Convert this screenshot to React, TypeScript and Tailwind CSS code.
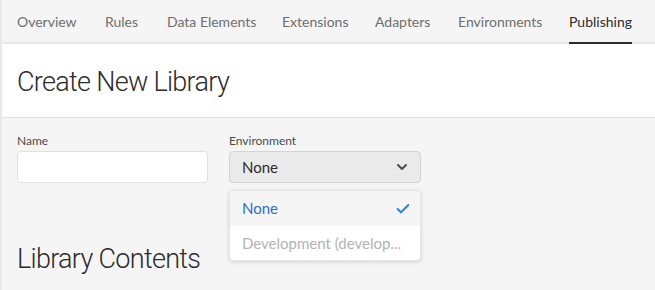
import { Check, ChevronDown } from 'lucide-react';

const tabs = [
  { label: 'Overview', w: 'w-[88px]' },
  { label: 'Rules', w: 'w-[62px]' },
  { label: 'Data Elements', w: 'w-[115px]' },
  { label: 'Extensions', w: 'w-[93px]' },
  { label: 'Adapters', w: 'w-[83px]' },
  { label: 'Environments', w: 'w-[111px]' },
  { label: 'Publishing', w: 'w-[59px]' },
];

const heading = 'font-[Roboto,sans-serif] text-[27px] font-light text-[#2c2c2c] tracking-[-0.7px]';

export default function App() {
  return (
    <div
      className="w-[655px] h-[290px] overflow-hidden bg-[#f5f5f5] border-l-2 border-[#e8e8e8] text-[#2c2c2c]"
      style={{ fontFamily: 'Lato, "Noto Sans", sans-serif' }}
    >
      {/* tabs */}
      <nav className="h-[44px] flex items-stretch pl-[15px] border-b-2 border-[#e8e8e8] bg-[#f5f5f5]">
        {tabs.map((t) => (
          <div
            key={t.label}
            className={`${t.w} shrink-0 whitespace-nowrap flex items-center`}
          >
            <span
              className={`relative h-full flex items-center text-[14px] ${
                t.label === 'Publishing' ? 'text-[#2c2c2c]' : 'text-[#6e6e6e]'
              }`}
            >
              {t.label}
              {t.label === 'Publishing' && (
                <span className="absolute left-0 right-0 -bottom-[2px] h-[2px] bg-[#2c2c2c]" />
              )}
            </span>
          </div>
        ))}
      </nav>

      {/* header */}
      <div className="h-[74px] bg-white border-b border-[#e1e1e1] flex items-center pl-[15px] pt-[4px]">
        <h1 className={heading}>Create New Library</h1>
      </div>

      {/* form */}
      <div className="pl-[15px] pt-[13px]">
        <div className="flex gap-[21px]">
          <div className="flex flex-col">
            <label className="text-[12px] text-[#4b4b4b] h-[20px] leading-[20px]">Name</label>
            <div className="w-[191px] h-[32px] bg-white border border-[#e1e1e1] rounded-[4px]" />
          </div>
          <div className="relative flex flex-col">
            <label className="text-[12px] text-[#4b4b4b] h-[20px] leading-[20px]">Environment</label>
            <div className="w-[192px] h-[32px] bg-[#eaeaea] border border-[#d3d3d3] rounded-[4px] flex items-center justify-between pl-[12px] pr-[10px] text-[15px]">
              <span>None</span>
              <ChevronDown size={16} strokeWidth={3} className="text-[#4b4b4b]" />
            </div>
            {/* menu */}
            <div className="absolute top-[59px] left-0 w-[192px] bg-white rounded-[4px] shadow-[0_1px_4px_rgba(0,0,0,0.15)] border border-[#e6e6e6] overflow-hidden z-10">
              <div className="h-[35px] bg-[#f5f5f5] flex items-center justify-between pl-[12px] pr-[9px] text-[15px] text-[#2d6ec9]">
                <span>None</span>
                <Check size={16} strokeWidth={3} className="text-[#2680eb]" />
              </div>
              <div className="h-[34px] flex items-center pl-[12px] text-[15px] text-[#b3b3b3] whitespace-nowrap">
                Development (develop...
              </div>
            </div>
          </div>
        </div>
        <h2 className={`mt-[56px] ${heading}`}>Library Contents</h2>
      </div>
    </div>
  );
}
